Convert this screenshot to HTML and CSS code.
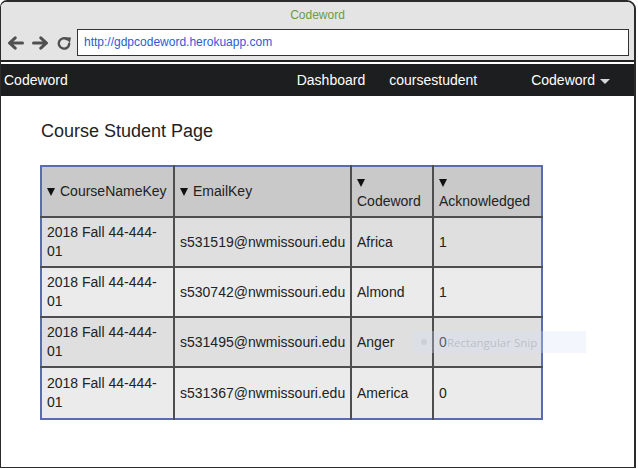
FILE: index.html
```html
<!DOCTYPE html>
<html>
<head>
<meta charset="utf-8">
<link rel="stylesheet" href="styles.css">
</head>
<body>
<div class="window">
  <div class="chrome">
    <div class="title">Codeword</div>
    <div class="addr-row">
      <div class="nav-icons">
        <svg class="ico" width="17" height="14" viewBox="0 0 17 14"><path d="M15.5 7H3M8.2 1.8L2.5 7l5.7 5.2" fill="none" stroke="#505050" stroke-width="3" stroke-linecap="round" stroke-linejoin="round"/></svg>
        <svg class="ico" width="17" height="14" viewBox="0 0 17 14"><path d="M1.5 7H14M8.8 1.8L14.5 7l-5.7 5.2" fill="none" stroke="#505050" stroke-width="3" stroke-linecap="round" stroke-linejoin="round"/></svg>
        <svg class="ico" width="15" height="14" viewBox="0 0 15 14"><path d="M12.2 7.8A5.2 5.2 0 1 1 10.2 3.3" fill="none" stroke="#505050" stroke-width="2.4" stroke-linecap="round"/><path d="M8 1.2L14 1.4 12.9 7Z" fill="#505050"/></svg>
      </div>
      <div class="addr">http://gdpcodeword.herokuapp.com</div>
    </div>
  </div>
  <nav class="navbar">
    <span class="brand">Codeword</span>
    <div class="links">
      <span class="link">Dashboard</span>
      <span class="link">coursestudent</span>
    </div>
    <span class="dropdown">Codeword <span class="caret"></span></span>
  </nav>
  <main class="content">
    <h1 class="page-title">Course Student Page</h1>
    <table class="data">
      <colgroup>
        <col class="c1"><col class="c2"><col class="c3"><col class="c4">
      </colgroup>
      <thead>
        <tr>
          <th><span class="tri"></span>CourseNameKey</th>
          <th><span class="tri"></span>EmailKey</th>
          <th><span class="tri"></span> Codeword</th>
          <th><span class="tri"></span> Acknowledged</th>
        </tr>
      </thead>
      <tbody>
        <tr><td>2018 Fall 44-444-01</td><td>s531519@nwmissouri.edu</td><td>Africa</td><td>1</td></tr>
        <tr><td>2018 Fall 44-444-01</td><td>s530742@nwmissouri.edu</td><td>Almond</td><td>1</td></tr>
        <tr><td>2018 Fall 44-444-01</td><td>s531495@nwmissouri.edu</td><td>Anger</td><td>0</td></tr>
        <tr><td>2018 Fall 44-444-01</td><td>s531367@nwmissouri.edu</td><td>America</td><td>0</td></tr>
      </tbody>
    </table>
  </main>
  <div class="snip"><span class="snip-dot"></span><span class="snip-text">Rectangular Snip</span></div>
</div>
</body>
</html>
```
FILE: styles.css
```css
html, body {
  margin: 0;
  padding: 0;
  background: #ffffff;
}
body {
  font-family: "Liberation Sans", Arial, sans-serif;
  color: #222;
}
.window {
  position: relative;
  box-sizing: border-box;
  width: 636px;
  height: 468px;
  border: 1px solid #2b2b2b;
  border-top-width: 2px;
  border-right-width: 2px;
  border-radius: 7px 9px 0 0;
  overflow: hidden;
  background: #fff;
}
.chrome {
  background: #e4e4e4;
  border-bottom: 2px solid #222;
  height: 58px;
}
.title {
  height: 27px;
  line-height: 26px;
  text-align: center;
  font-size: 12px;
  color: #6a9c3e;
}
.addr-row {
  display: flex;
  align-items: center;
  padding-right: 5px;
}
.nav-icons {
  display: flex;
  align-items: center;
  width: 76px;
  padding-left: 6px;
  gap: 8px;
  box-sizing: border-box;
}
.ico {
  display: block;
}
.addr {
  flex: 1;
  height: 27px;
  box-sizing: border-box;
  border: 1px solid #333;
  background: #fff;
  font-size: 12px;
  line-height: 25px;
  padding-left: 6px;
  color: #2e5ad8;
}
.navbar {
  margin-top: 2px;
  height: 32px;
  background: #1d1e20;
  color: #fff;
  display: flex;
  align-items: center;
  font-size: 14px;
  padding: 0 24px 0 3px;
}
.links {
  margin-left: auto;
  display: flex;
  gap: 24px;
}
.dropdown {
  margin-left: 54px;
  display: flex;
  align-items: center;
}
.caret {
  display: inline-block;
  width: 0;
  height: 0;
  margin-left: 5px;
  margin-top: 3px;
  border-left: 5.5px solid transparent;
  border-right: 5.5px solid transparent;
  border-top: 5px solid #d8d8d8;
}
.content {
  padding: 24px 0 0 39px;
}
.page-title {
  margin: 0 0 23px 0;
  padding-left: 1px;
  font-size: 18px;
  font-weight: normal;
  line-height: 22px;
  color: #222;
}
.data {
  border-collapse: collapse;
  table-layout: fixed;
  width: 501px;
  border: 2px solid #5a6cae;
}
.c1 { width: 133px; }
.c2 { width: 177px; }
.c3 { width: 82px; }
.c4 { width: 109px; }
.data th, .data td {
  border: 2px solid #4e4e4e;
  padding: 5px 3px 5px 5px;
  font-size: 14px;
  line-height: 19px;
  text-align: left;
  vertical-align: middle;
  font-weight: normal;
  color: #222;
}
.data th { background: #c9c9c9; height: 39px; }
.data td { height: 38px; }
.data tbody tr:last-child td { height: 40px; }
.data tbody tr:nth-child(odd) td { background: #dfdfdf; }
.data tbody tr:nth-child(even) td { background: #ebebeb; }
.data tr > :first-child { border-left: none; }
.data tr > :last-child { border-right: none; }
.data thead th { border-top: none; }
.data tbody tr:last-child td { border-bottom: none; }
.tri {
  display: inline-block;
  width: 0;
  height: 0;
  border-left: 4.5px solid transparent;
  border-right: 4.5px solid transparent;
  border-top: 8px solid #111;
  margin-right: 5px;
  vertical-align: 0;
}
.snip {
  position: absolute;
  left: 412px;
  top: 329px;
  width: 173px;
  height: 22px;
  background: rgba(214, 230, 250, 0.3);
  display: flex;
  align-items: center;
}
.snip-dot {
  width: 6px;
  height: 6px;
  border-radius: 50%;
  background: rgba(190, 196, 204, 0.6);
  margin-left: 8px;
}
.snip-text {
  margin-left: 20px;
  font-family: "Open Sans", sans-serif;
  font-size: 11.5px;
  color: rgba(170, 176, 184, 0.7);
}
```
